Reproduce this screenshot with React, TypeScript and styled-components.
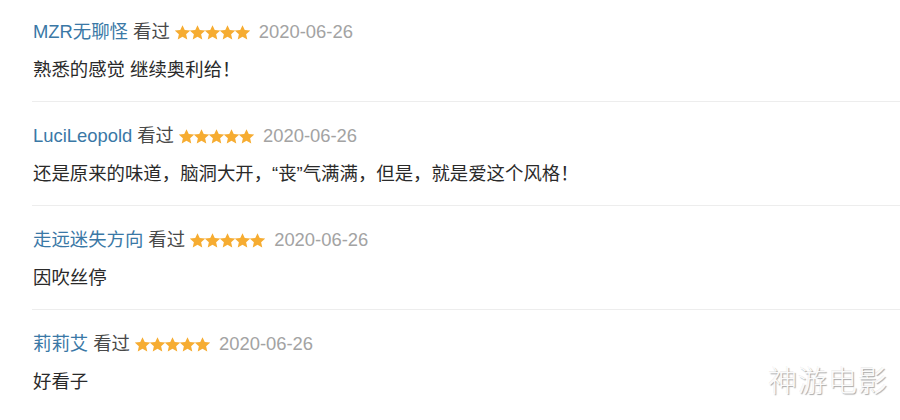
import React from 'react';
import styled, { createGlobalStyle } from 'styled-components';

const GlobalStyle = createGlobalStyle`
  html, body {
    margin: 0;
    padding: 0;
    background: #fff;
  }
  body {
    font-family: "Liberation Sans", Arial, "Noto Sans CJK SC", sans-serif;
  }
`;

const StyledPage = styled.div`
  position: relative;
  width: 900px;
  height: 420px;
  overflow: hidden;
  background: #fff;
`;

const StyledList = styled.div`
  display: flex;
  flex-direction: column;
  padding-left: 32px;
`;

const StyledItem = styled.div`
  display: flex;
  flex-direction: column;
  gap: 14px;
  padding: 22px 0 19px 1px;
  border-bottom: 1px solid #ededed;

  &:first-child {
    padding-top: 20px;
  }

  &:last-child {
    border-bottom: none;
  }
`;

const StyledHeader = styled.div`
  display: flex;
  align-items: center;
  gap: 5px;
  font-size: 18.4px;
  line-height: 24px;
`;

const StyledName = styled.span`
  color: #3a78a6;
`;

const StyledAction = styled.span`
  color: #494949;
`;

const StyledStars = styled.span`
  display: inline-flex;
  margin-right: 4px;
`;

const StyledDate = styled.span`
  color: #a3a3a3;
`;

const StyledContent = styled.p`
  margin: 0;
  font-size: 18.4px;
  line-height: 24px;
  color: #2a2a2a;
`;

const StyledWatermark = styled.div`
  position: absolute;
  right: 12px;
  bottom: 20px;
  font-family: "Noto Sans CJK SC", sans-serif;
  font-size: 29px;
  font-weight: 300;
  letter-spacing: 1px;
  color: #fbfbfb;
  text-shadow: 1px 1px 1px rgba(0, 0, 0, 0.35), -1px -1px 0 rgba(0, 0, 0, 0.06);
`;

const Star: React.FC = () => (
  <svg width="15" height="15" viewBox="1 1 22 22">
    <path
      d="M12 1.2l3.3 7.2 7.9.8-5.9 5.3 1.7 7.8L12 18.3l-7 4 1.7-7.8-5.9-5.3 7.9-.8z"
      fill="#f6ac31"
    />
  </svg>
);

const reviews = [
  { name: 'MZR无聊怪', text: '熟悉的感觉 继续奥利给！' },
  { name: 'LuciLeopold', text: '还是原来的味道，脑洞大开，“丧”气满满，但是，就是爱这个风格！' },
  { name: '走远迷失方向', text: '因吹丝停' },
  { name: '莉莉艾', text: '好看子' },
];

const App: React.FC = () => (
  <StyledPage>
    <GlobalStyle />
    <StyledList>
      {reviews.map((r) => (
        <StyledItem key={r.name}>
          <StyledHeader>
            <StyledName>{r.name}</StyledName>
            <StyledAction>看过</StyledAction>
            <StyledStars>
              {[0, 1, 2, 3, 4].map((i) => (
                <Star key={i} />
              ))}
            </StyledStars>
            <StyledDate>2020-06-26</StyledDate>
          </StyledHeader>
          <StyledContent>{r.text}</StyledContent>
        </StyledItem>
      ))}
    </StyledList>
    <StyledWatermark>神游电影</StyledWatermark>
  </StyledPage>
);

export default App;
